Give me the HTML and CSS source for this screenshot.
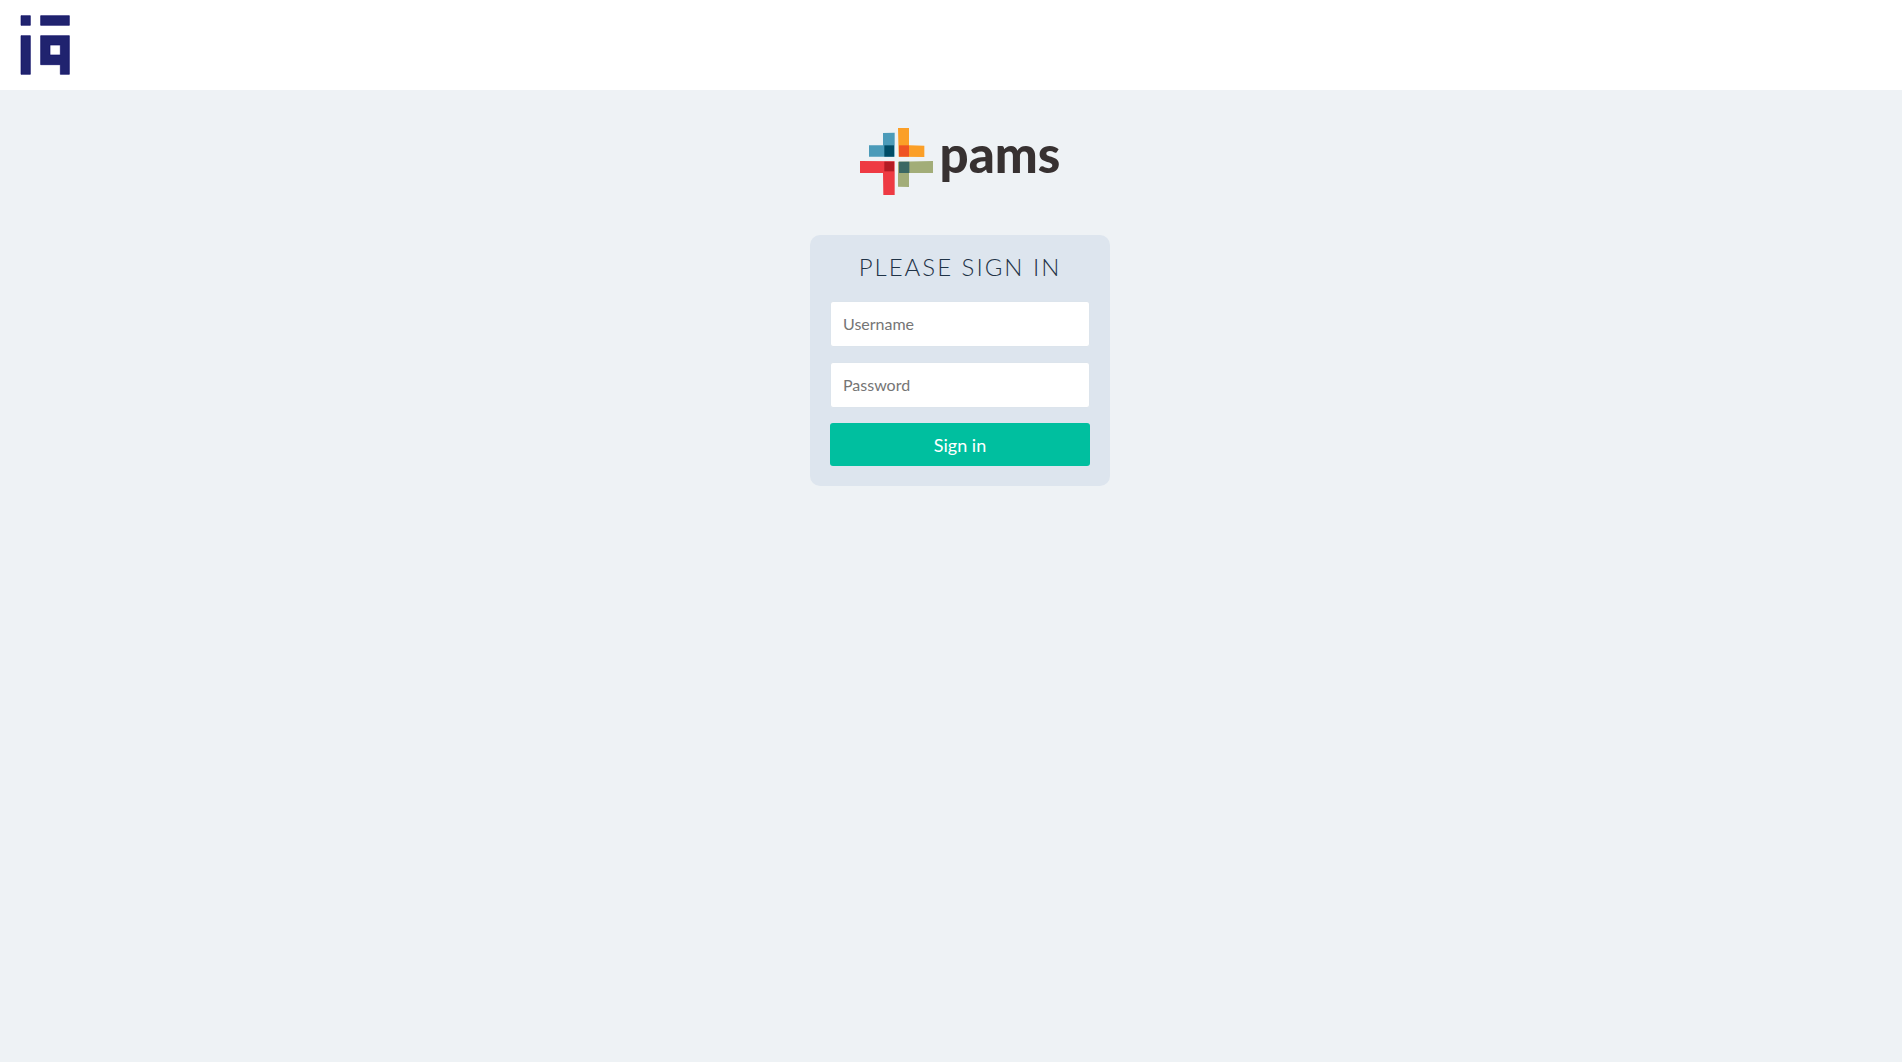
FILE: index.html
```html
<!DOCTYPE html>
<html lang="en">
<head>
    <meta charset="UTF-8">
    <meta name="viewport" content="width=device-width, initial-scale=1.0">
    <title>Sign in</title>
    <link rel="stylesheet" href="styles.css">
</head>
<body>
    <header class="top-bar">
        <svg class="brand-icon" viewBox="60 45 150 180" aria-label="iq">
            <path d="M63 47h28v29h-28zM122 47h86v29h-86zM63 107h28v116h-28zM122 107h86v116h-27v-29h-59zM150 135v30h31v-30z" fill-rule="evenodd"/>
        </svg>
    </header>

    <main class="login-page">
        <div class="logo">
            <svg class="logo-mark" viewBox="30 24 222 204" aria-hidden="true">
                <!-- blue -->
                <path d="M99 39l35-1v72h-77v-34h42z" fill="#4b9bb9"/>
                <path d="M103 76h29v34h-29z" fill="#004c66"/>
                <!-- orange -->
                <path d="M144 24h33v52l46 1v34l-77-1z" fill="#fb9f27"/>
                <path d="M147 76h30v34h-30z" fill="#ef5323"/>
                <!-- red -->
                <path d="M30 123l104 1v101h-34l-1-66h-69z" fill="#ee3a43"/>
                <path d="M103 125h29v29h-29z" fill="#b31b24"/>
                <!-- green -->
                <path d="M144 125l105-2v36h-72v42l-33-1z" fill="#a2ad78"/>
                <path d="M147 125h31v34h-31z" fill="#3b6863"/>
            </svg>
            <span class="logo-text">pams</span>
        </div>

        <form class="login-form">
            <h2>Please sign in</h2>
            <input type="text" name="username" placeholder="Username" aria-label="Username" required>
            <input type="password" name="password" placeholder="Password" aria-label="Password" required>
            <button type="submit">Sign in</button>
        </form>
    </main>
</body>
</html>
```

FILE: styles.css
```css
* {
    box-sizing: border-box;
}
body {
    margin: 0;
    min-height: 100vh;
    font-family: Lato, sans-serif;
    font-size: 16px;
    color: #1f3347;
    background-color: #eef2f5;
}
.top-bar {
    padding: 15px 20px;
    background-color: #fff;
}
.brand-icon {
    display: block;
    width: 50px;
    height: 60px;
    fill: #20236f;
    stroke: #0c0c66;
    stroke-width: 2;
}
.login-page {
    display: flex;
    flex-direction: column;
    align-items: center;
    gap: 39px;
    padding: 38px 16px;
    margin-left: 18px;
}
.logo {
    display: flex;
    align-items: center;
    gap: 6px;
}
.logo-mark {
    width: 74px;
    height: 68px;
}
.logo-text {
    font-size: 51px;
    font-weight: 900;
    line-height: 52px;
    padding-bottom: 16px;
    color: #373131;
}
.login-form {
    display: flex;
    flex-direction: column;
    gap: 15px;
    width: 100%;
    max-width: 300px;
    padding: 20px;
    border-radius: 10px;
    background-color: #dde5ee;
}
.login-form h2 {
    margin: 0 0 7px;
    font-size: 24px;
    font-weight: 300;
    line-height: 24px;
    letter-spacing: 2px;
    text-align: center;
    text-transform: uppercase;
    white-space: nowrap;
}
.login-form input {
    height: 46px;
    padding: 0 12px 2px;
    border: 1px solid #dce4ec;
    border-radius: 3px;
    font: inherit;
    background-color: #fff;
}
.login-form input::placeholder {
    color: #757575;
}
.login-form button {
    height: 43px;
    border: none;
    border-radius: 3px;
    font: inherit;
    font-size: 18px;
    color: #fff;
    background-color: #00bf9f;
    cursor: pointer;
}
.login-form button:hover {
    background-color: #00a98d;
}
```
